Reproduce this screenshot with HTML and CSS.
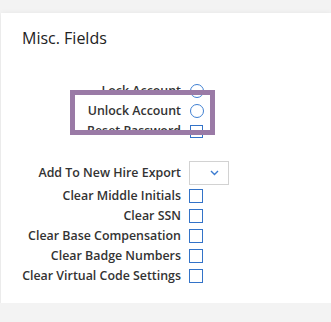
FILE: index.html
```html
<!DOCTYPE html>
<html>
<head>
  <title>Misc. Fields</title>
  <link rel="stylesheet" href="styles.css">
</head>
<body>
  <div class="card">
    <h2 class="card-title">Misc. Fields</h2>

    <div class="field-group account-group">
      <label class="field-label" for="lock-account">Lock Account</label>
      <input class="radio" type="radio" id="lock-account" name="account">
      <label class="field-label" for="unlock-account">Unlock Account</label>
      <input class="radio" type="radio" id="unlock-account" name="account">
      <label class="field-label" for="reset-password">Reset Password</label>
      <input class="check" type="checkbox" id="reset-password">
    </div>

    <div class="field-group clear-group">
      <label class="field-label tall" for="new-hire">Add To New Hire Export</label>
      <div class="select-box" id="new-hire">
        <svg width="9" height="6" viewBox="0 0 9 6"><path d="M1 1l3.5 3.5L8 1" fill="none" stroke="#3b7bd0" stroke-width="1.4"/></svg>
      </div>
      <label class="field-label" for="clear-middle">Clear Middle Initials</label>
      <input class="check" type="checkbox" id="clear-middle">
      <label class="field-label" for="clear-ssn">Clear SSN</label>
      <input class="check" type="checkbox" id="clear-ssn">
      <label class="field-label" for="clear-base">Clear Base Compensation</label>
      <input class="check" type="checkbox" id="clear-base">
      <label class="field-label" for="clear-badge">Clear Badge Numbers</label>
      <input class="check" type="checkbox" id="clear-badge">
      <label class="field-label" for="clear-virtual">Clear Virtual Code Settings</label>
      <input class="check" type="checkbox" id="clear-virtual">
    </div>

    <div class="highlight"></div>
  </div>
</body>
</html>
```

FILE: styles.css
```css
body {
  margin: 0;
  background-color: #f3f3f3;
  font-family: "Open Sans", Arial, sans-serif;
}

.card {
  position: relative;
  margin: 13px 0 0 1px;
  padding: 14px 0 17px 0;
  background-color: #fff;
  box-shadow: 0 1px 6px rgba(0, 0, 0, 0.08);
}

.card-title {
  margin: 0 0 32px 21px;
  font-size: 16px;
  font-weight: 400;
  line-height: 22px;
  color: #222;
}

.field-group {
  display: grid;
  grid-template-columns: 180px auto;
  grid-auto-rows: 20px;
  column-gap: 8px;
  align-items: center;
  justify-items: start;
}

.clear-group {
  margin-top: 19px;
  grid-template-rows: 26px;
}

.field-label {
  justify-self: end;
  font-size: 12.4px;
  font-weight: 600;
  line-height: 20px;
  color: #333;
  white-space: nowrap;
}

.radio, .check {
  appearance: none;
  margin: 0;
  background: #fff;
}

.radio {
  width: 14px;
  height: 14px;
  margin-left: 1px;
  border: 1px solid #3f80d2;
  border-radius: 50%;
}

.check {
  width: 14px;
  height: 14px;
  border: 1px solid #3373c8;
}

.account-group .check {
  margin-left: 1px;
  width: 13px;
  height: 13px;
}

.select-box {
  display: flex;
  align-items: center;
  justify-content: center;
  box-sizing: border-box;
  width: 40px;
  height: 24px;
  padding-left: 10px;
  border: 1px solid #d2d2d2;
}

.highlight {
  position: absolute;
  left: 69px;
  top: 77px;
  width: 145px;
  height: 45px;
  box-sizing: border-box;
  border: 5px solid #9a7aa6;
}
```
